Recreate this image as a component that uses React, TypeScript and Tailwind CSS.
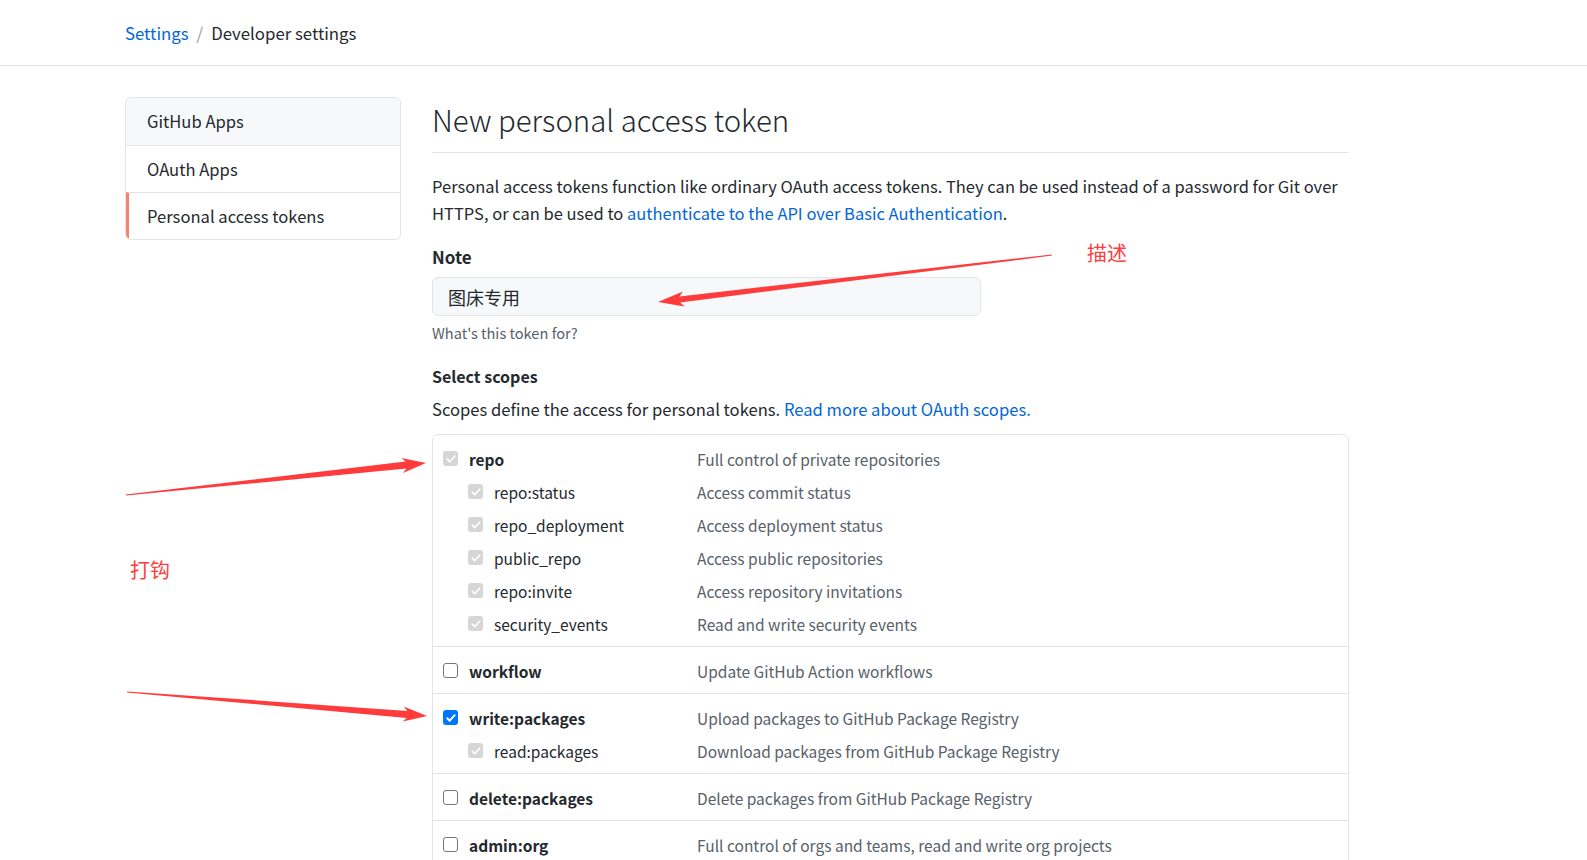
import React from 'react';

type Pt = [number, number];

interface Scope {
  name: string;
  desc: string;
  state: 'on' | 'off' | 'implied';
}

interface ScopeGroup {
  main: Scope;
  subs: Scope[];
}

const groups: ScopeGroup[] = [
  {
    main: { name: 'repo', desc: 'Full control of private repositories', state: 'implied' },
    subs: [
      { name: 'repo:status', desc: 'Access commit status', state: 'implied' },
      { name: 'repo_deployment', desc: 'Access deployment status', state: 'implied' },
      { name: 'public_repo', desc: 'Access public repositories', state: 'implied' },
      { name: 'repo:invite', desc: 'Access repository invitations', state: 'implied' },
      { name: 'security_events', desc: 'Read and write security events', state: 'implied' },
    ],
  },
  {
    main: { name: 'workflow', desc: 'Update GitHub Action workflows', state: 'off' },
    subs: [],
  },
  {
    main: { name: 'write:packages', desc: 'Upload packages to GitHub Package Registry', state: 'on' },
    subs: [{ name: 'read:packages', desc: 'Download packages from GitHub Package Registry', state: 'implied' }],
  },
  {
    main: { name: 'delete:packages', desc: 'Delete packages from GitHub Package Registry', state: 'off' },
    subs: [],
  },
  {
    main: { name: 'admin:org', desc: 'Full control of orgs and teams, read and write org projects', state: 'off' },
    subs: [],
  },
];

function Check({ state }: { state: Scope['state'] }) {
  if (state === 'off') {
    return <span className="block shrink-0 w-[15px] h-[15px] rounded-[3px] border border-[#767676] bg-white" />;
  }
  return (
    <span
      className={`flex shrink-0 items-center justify-center w-[15px] h-[15px] rounded-[3px] ${
        state === 'on' ? 'bg-[#0075ff]' : 'bg-[#d6d6d6]'
      }`}
    >
      <svg viewBox="0 0 12 12" className="w-[12px] h-[12px]" fill="none">
        <path
          d="M2.3 6.2l2.4 2.5 5-5.5"
          stroke="white"
          strokeWidth={state === 'on' ? 2 : 1.7}
          strokeLinecap="round"
          strokeLinejoin="round"
        />
      </svg>
    </span>
  );
}

function ScopeRow({ scope, sub }: { scope: Scope; sub?: boolean }) {
  return (
    <div className="flex items-center h-[33px]">
      <div className={`flex items-center w-[254px] ${sub ? 'pl-[25px]' : ''}`}>
        <Check state={scope.state} />
        <span className={`ml-[11px] text-[#24292e] ${sub ? '' : 'font-semibold'}`}>{scope.name}</span>
      </div>
      <span className="text-[#586069]">{scope.desc}</span>
    </div>
  );
}

// tapered screenshot-tool style arrow
function arrowPoints(tail: Pt, tip: Pt, headLen = 20, headW = 16, neckW = 6): string {
  const dx = tip[0] - tail[0];
  const dy = tip[1] - tail[1];
  const len = Math.hypot(dx, dy);
  const ux = dx / len;
  const uy = dy / len;
  const nx = -uy;
  const ny = ux;
  const neck: Pt = [tip[0] - ux * headLen, tip[1] - uy * headLen];
  const barb: Pt = [tip[0] - ux * (headLen + 4), tip[1] - uy * (headLen + 4)];
  const pts: Pt[] = [
    [tail[0] + nx * 0.6, tail[1] + ny * 0.6],
    [neck[0] + (nx * neckW) / 2, neck[1] + (ny * neckW) / 2],
    [barb[0] + (nx * headW) / 2, barb[1] + (ny * headW) / 2],
    tip,
    [barb[0] - (nx * headW) / 2, barb[1] - (ny * headW) / 2],
    [neck[0] - (nx * neckW) / 2, neck[1] - (ny * neckW) / 2],
    [tail[0] - nx * 0.6, tail[1] - ny * 0.6],
  ];
  return pts.map((p) => `${p[0].toFixed(1)},${p[1].toFixed(1)}`).join(' ');
}

export default function App() {
  return (
    <div
      className="relative h-[860px] overflow-hidden bg-white text-[#24292e] text-[17px] leading-[26px]"
      style={{ fontFamily: '"Noto Sans CJK SC", "Noto Sans", sans-serif' }}
    >
      {/* breadcrumb */}
      <div className="h-[66px] border-b border-[#e1e4e8] flex items-center pl-[125px] pt-[1px] text-[16.8px]">
        <a className="text-[#0366d6]">Settings</a>
        <span className="mx-[8px] text-[#959da5]">/</span>
        <span>Developer settings</span>
      </div>

      <div className="flex pl-[125px] pt-[31px] gap-[31px]">
        {/* sidebar */}
        <nav className="w-[276px] h-fit border border-[#e1e4e8] rounded-[6px] overflow-hidden text-[16.6px]">
          <div className="h-[47px] flex items-center pl-[21px] pb-[1px] bg-[#f6f8fa]">GitHub Apps</div>
          <div className="h-[47px] flex items-center pl-[21px] pb-[1px] border-t border-[#e1e4e8]">OAuth Apps</div>
          <div className="h-[47px] flex items-center pl-[18px] border-t border-[#e1e4e8] border-l-[3px] border-l-[#f9826c]">
            Personal access tokens
          </div>
        </nav>

        {/* main */}
        <main className="w-[917px] pt-[3px]">
          <h1 className="text-[29.4px] leading-[38px] font-light pb-[14px] border-b border-[#e1e4e8]">
            New personal access token
          </h1>
          <p className="mt-[20px] leading-[26.5px] text-[16.5px] whitespace-nowrap">
            Personal access tokens function like ordinary OAuth access tokens. They can be used instead of a password for Git over
            <br />
            HTTPS, or can be used to <a className="text-[#0366d6]">authenticate to the API over Basic Authentication</a>.
          </p>

          <div className="mt-[18px] font-semibold">Note</div>
          <div className="mt-[7px] w-[549px] h-[39px] rounded-[6px] border border-[#e1e4e8] bg-[#f6f8fa] flex items-center pl-[15px] text-[18px]">
            图床专用
          </div>
          <div className="mt-[7px] text-[14.6px] leading-[20px] text-[#586069]">What's this token for?</div>

          <div className="mt-[20px] font-semibold text-[16px]">Select scopes</div>
          <div className="mt-[7px] text-[16.6px]">
            Scopes define the access for personal tokens. <a className="text-[#0366d6]">Read more about OAuth scopes.</a>
          </div>

          <div className="mt-[12px] border border-[#e1e4e8] rounded-[6px] text-[15.5px]">
            {groups.map((g, i) => (
              <div key={g.main.name} className={`pl-[10px] pt-[7px] pb-[6px] ${i > 0 ? 'border-t border-[#e1e4e8]' : ''}`}>
                <ScopeRow scope={g.main} />
                {g.subs.map((s) => (
                  <ScopeRow key={s.name} scope={s} sub />
                ))}
              </div>
            ))}
          </div>
        </main>
      </div>

      {/* red annotations drawn over the page */}
      <svg className="absolute inset-0 pointer-events-none" width="1587" height="860" viewBox="0 0 1587 860">
        <polygon points={arrowPoints([1052, 255], [658, 302], 22, 15, 6)} fill="#ff3b3b" />
        <polygon points={arrowPoints([126, 495], [426, 463], 20, 15, 7)} fill="#ff3b3b" />
        <polygon points={arrowPoints([127, 692], [427, 716], 20, 15, 7)} fill="#ff3b3b" />
      </svg>
      <span className="absolute left-[1087px] top-[239px] text-[20px] leading-[28px] text-[#ff3b3b]">描述</span>
      <span className="absolute left-[130px] top-[556px] text-[20px] leading-[28px] text-[#ff3b3b]">打钩</span>
    </div>
  );
}
